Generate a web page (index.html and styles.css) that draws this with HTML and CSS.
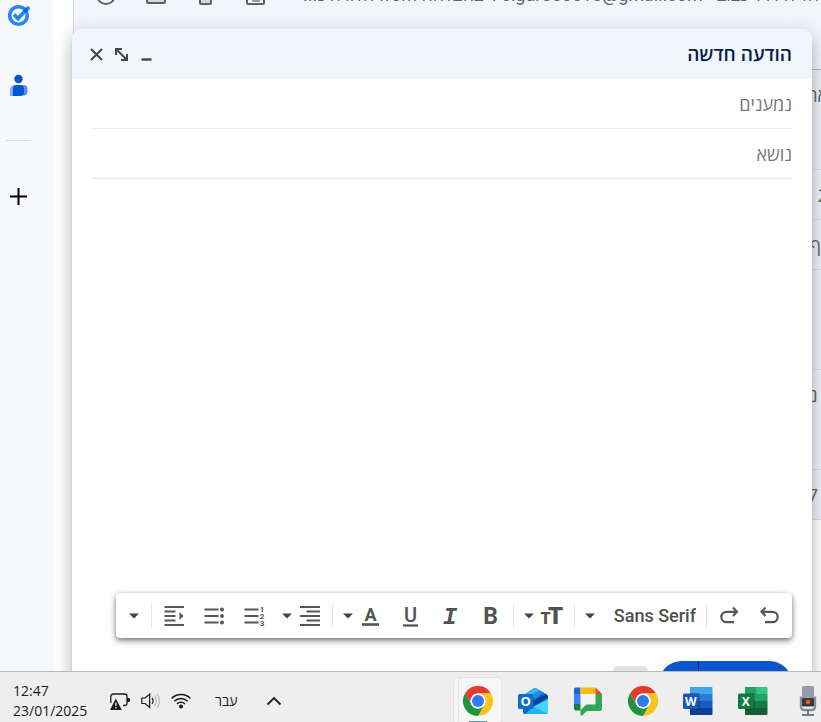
FILE: index.html
```html
<!DOCTYPE html>
<html lang="he">
<head>
<meta charset="utf-8">
<meta name="viewport" content="width=device-width, initial-scale=1">
<title>הודעה חדשה</title>
<link rel="stylesheet" href="styles.css">
</head>
<body>
<svg class="defs" aria-hidden="true">
  <symbol id="chrome" viewBox="0 0 48 48">
    <path fill="#e33b2e" d="M3.2 12A24 24 0 0 1 44.8 12H24A12 12 0 0 0 13.6 30Z"/>
    <path fill="#fcc31e" d="M44.8 12A24 24 0 0 1 24 48L34.4 30A12 12 0 0 0 24 12Z"/>
    <path fill="#229342" d="M24 48A24 24 0 0 1 3.2 12L13.6 30A12 12 0 0 0 34.4 30Z"/>
    <circle cx="24" cy="24" r="12" fill="#fff"/>
    <circle cx="24" cy="24" r="9.6" fill="#2f7bee"/>
  </symbol>
  <symbol id="caret" viewBox="0 0 10 6"><path fill="#444746" d="M0 .5h10L5 5.500z"/></symbol>
</svg>

<div class="workspace">
  <nav class="sidebar" aria-label="חלונית צדדית">
    <button class="side-button" aria-label="Tasks">
      <svg width="24" height="24" viewBox="0 0 24 24">
        <circle cx="11.500" cy="12.500" r="8.800" fill="none" stroke="#2684fc" stroke-width="3.600"/>
        <path d="M7 11.500l4 4 9.500-10" fill="none" stroke="#2684fc" stroke-width="3.800"/>
        <path d="M16.300 7.500l3-3.200 2.500 2.400-3 3.200z" fill="#0066da"/>
        <path d="M19.300 4.300l1.500-1.500 2.500 2.400-1.500 1.500z" fill="#2684fc"/>
      </svg>
    </button>
    <button class="side-button" aria-label="אנשי קשר">
      <svg width="24" height="24" viewBox="0 0 24 24">
        <circle cx="11.500" cy="6" r="4.200" fill="#0057cc"/>
        <path d="M8 12h5v11H3v-6a5 5 0 0 1 5-5z" fill="#7ea6fb"/>
        <path d="M12 12h4.500a4 4 0 0 1 4 4v3a4 4 0 0 1-4 3.500h-4.500z" fill="#5b8df8"/>
        <path d="M10 12h3a4 4 0 0 1 4 4v3a4 4 0 0 1-4 4H6v-7a4 4 0 0 1 4-4z" fill="#0057cc"/>
      </svg>
    </button>
    <hr class="side-divider">
    <button class="side-button" aria-label="הורדת תוספים">
      <svg width="24" height="24" viewBox="0 0 24 24"><path d="M11.500 4v17M3 12.500h17" stroke="#000" stroke-width="2"/></svg>
    </button>
  </nav>

  <main class="mail">
    <ul class="mail-list">
      <li class="mail-row mail-row--tall mail-row--hover">
        <span class="row-actions">
          <svg width="24" height="24" viewBox="0 0 24 24"><circle cx="12" cy="12" r="9" fill="none" stroke="#5f6368" stroke-width="2"/></svg>
          <svg width="24" height="24" viewBox="0 0 24 24"><rect x="3" y="4" width="18" height="16" rx="1" fill="#d5d7dc" stroke="#5f6368" stroke-width="2"/></svg>
          <svg width="24" height="24" viewBox="0 0 24 24"><rect x="6" y="4" width="11" height="17" rx="1" fill="#d5d7dc" stroke="#5f6368" stroke-width="2"/></svg>
          <svg width="24" height="24" viewBox="0 0 24 24"><rect x="3" y="4" width="17" height="17" rx="1" fill="#f2f5fc" stroke="#5f6368" stroke-width="2"/><path d="M8 18h8" stroke="#9a9da1" stroke-width="2"/></svg>
        </span>
        <span class="snippet" dir="rtl">אליה דויד נבוב - cigar555515@gmail.com ד בהצלחה from הלוויה נ...</span>
      </li>
      <li class="mail-row mail-row--tall"><span class="snippet snippet--edge snippet--over" dir="rtl">אר</span></li>
      <li class="mail-row"><span class="snippet snippet--edge snippet--over">2</span></li>
      <li class="mail-row"><span class="snippet snippet--edge" dir="rtl">ף</span></li>
      <li class="mail-row mail-row--tall"></li>
      <li class="mail-row mail-row--tall"><span class="snippet snippet--edge snippet--over" dir="rtl">- נ</span></li>
      <li class="mail-row"><span class="snippet snippet--edge snippet--inset">7</span></li>
    </ul>
  </main>

  <form class="compose" dir="rtl">
    <header class="compose-header">
      <h1 class="compose-title">הודעה חדשה</h1>
      <button type="button" class="window-button" aria-label="מזעור">
        <svg width="15" height="15" viewBox="0 0 15 15"><path d="M2.500 12.500h10" stroke="#444746" stroke-width="2.400"/></svg>
      </button>
      <button type="button" class="window-button" aria-label="מסך מלא">
        <svg width="15" height="15" viewBox="0 0 15 15"><path d="M2 8V2h6M13 7v6H7M2 2l11 11" fill="none" stroke="#444746" stroke-width="2"/></svg>
      </button>
      <button type="button" class="window-button" aria-label="סגירה">
        <svg width="15" height="15" viewBox="0 0 15 15"><path d="M2 2l11 11M13 2L2 13" stroke="#444746" stroke-width="2"/></svg>
      </button>
    </header>
    <div class="fields">
      <input class="field" type="text" aria-label="נמענים" placeholder="נמענים">
      <input class="field" type="text" aria-label="נושא" placeholder="נושא">
    </div>
    <textarea class="message" aria-label="גוף ההודעה"></textarea>

    <div class="toolbar" role="toolbar" aria-label="אפשרויות עיצוב">
      <button type="button" class="tool" aria-label="ביטול">
        <svg width="24" height="24" viewBox="0 0 24 24"><path d="M8.500 3.500L4.500 7.800l4 4.200M5 7.800h10.500a5.200 5.200 0 0 1 0 10.400H8" fill="none" stroke="#555857" stroke-width="2.200"/></svg>
      </button>
      <button type="button" class="tool" aria-label="ביצוע מחדש">
        <svg width="24" height="24" viewBox="0 0 24 24"><path d="M16 3.500l4 4.300-4 4.200M19.500 7.800H9.500a5.200 5.200 0 0 0 0 10.400H17" fill="none" stroke="#555857" stroke-width="2.200"/></svg>
      </button>
      <span class="separator"></span>
      <label class="font-picker">
        <select class="font-select" aria-label="גופן"><option>Sans Serif</option></select>
        <svg class="caret" width="10" height="6"><use href="#caret"/></svg>
      </label>
      <span class="separator"></span>
      <button type="button" class="tool tool--menu" aria-label="גודל">
        <svg width="24" height="24" viewBox="0 0 24 24"><g class="glyph glyph--heavy" text-anchor="middle"><text x="5.500" y="20" font-size="16">T</text><text x="15.500" y="20" font-size="24">T</text></g></svg>
        <svg class="caret" width="10" height="6"><use href="#caret"/></svg>
      </button>
      <span class="separator"></span>
      <button type="button" class="tool" aria-label="מודגש">
        <svg width="24" height="24" viewBox="0 0 24 24"><text class="glyph" x="11.500" y="20" font-size="23" text-anchor="middle">B</text></svg>
      </button>
      <button type="button" class="tool" aria-label="נטוי">
        <svg width="24" height="24" viewBox="0 0 24 24"><text class="glyph glyph--italic" x="11" y="20" font-size="24" text-anchor="middle">I</text></svg>
      </button>
      <button type="button" class="tool" aria-label="קו תחתון">
        <svg width="24" height="24" viewBox="0 0 24 24"><text class="glyph glyph--medium" x="11.500" y="18" font-size="20" text-anchor="middle">U</text><path d="M4 21.500h15" stroke="#505352" stroke-width="2.200"/></svg>
      </button>
      <button type="button" class="tool tool--menu" aria-label="צבע הטקסט">
        <svg width="24" height="24" viewBox="0 0 24 24"><text class="glyph" x="11.500" y="17" font-size="18" text-anchor="middle">A</text><path d="M3 20.500h17" stroke="#505352" stroke-width="2.600"/></svg>
        <svg class="caret" width="10" height="6"><use href="#caret"/></svg>
      </button>
      <span class="separator"></span>
      <button type="button" class="tool tool--menu" aria-label="יישור">
        <svg width="24" height="24" viewBox="0 0 24 24"><path d="M2 3h20M8.500 7.500H22M2 12h20M8.500 16.500H22M2 21h20" stroke="#555857" stroke-width="2.200"/></svg>
        <svg class="caret" width="10" height="6"><use href="#caret"/></svg>
      </button>
      <button type="button" class="tool" aria-label="רשימה ממוספרת">
        <svg width="24" height="24" viewBox="0 0 24 24"><path d="M2.500 5.500h14M2.500 12h14M2.500 18.500h14" stroke="#555857" stroke-width="2.200"/><g class="glyph" font-size="8" text-anchor="middle"><text x="20" y="8">1</text><text x="20" y="15">2</text><text x="20" y="22">3</text></g></svg>
      </button>
      <button type="button" class="tool" aria-label="רשימת תבליטים">
        <svg width="24" height="24" viewBox="0 0 24 24"><path d="M2.500 5.500h14M2.500 12h14M2.500 18.500h14" stroke="#555857" stroke-width="2.200"/><g fill="#505352"><circle cx="20" cy="5.500" r="1.900"/><circle cx="20" cy="12" r="1.900"/><circle cx="20" cy="18.500" r="1.900"/></g></svg>
      </button>
      <button type="button" class="tool" aria-label="הקטנת כניסה">
        <svg width="24" height="24" viewBox="0 0 24 24"><path d="M2.500 3h19.500M2.500 7.500H13.500M2.500 12H13.500M2.500 16.500H13.500M2.500 21h19.500" stroke="#555857" stroke-width="2.200"/><path d="M17.500 8l4 4-4 4z" fill="#505352"/></svg>
      </button>
      <span class="separator"></span>
      <button type="button" class="tool tool--narrow" aria-label="אפשרויות עיצוב נוספות">
        <svg class="caret" width="10" height="6"><use href="#caret"/></svg>
      </button>
    </div>

    <footer class="compose-footer">
      <button type="button" class="send" aria-label="שליחה"></button>
      <button type="button" class="send-more" aria-label="אפשרויות שליחה נוספות"></button>
      <button type="button" class="format-toggle" aria-label="אפשרויות עיצוב"></button>
    </footer>
  </form>
</div>

<footer class="taskbar">
  <div class="tray">
    <time class="clock" datetime="2025-01-23T12:47">12:47<br>23/01/2025</time>
    <svg width="22" height="20" viewBox="0 0 22 20">
      <path d="M1.800 12V5.500a2.500 2.500 0 0 1 2.500-2.500h11.200a2.500 2.500 0 0 1 2.500 2.500v6.500a2.500 2.500 0 0 1-2.500 2.500H14" fill="none" stroke="#1b1b1b" stroke-width="1.300"/>
      <path d="M18 7h1.300a1.400 1.400 0 0 1 0 4H18z" fill="#1b1b1b"/>
      <path d="M6.800 7.500l6 11.500H1z" fill="#1b1b1b"/><path d="M6.900 11.500v3.500M6.900 16v1.500" stroke="#fff" stroke-width="1.200"/>
    </svg>
    <svg width="20" height="20" viewBox="0 0 20 20" fill="none" stroke="#1b1b1b" stroke-width="1.200">
      <path d="M.8 7h3.400l4.500-4v13.500l-4.500-4H.8z"/><path d="M11 6.800a5 5 0 0 1 0 6"/>
      <path d="M13.500 4.500a8 8 0 0 1 0 10.500M16 2.800a11 11 0 0 1 0 14" stroke="#bcbcbc"/>
    </svg>
    <svg width="20" height="20" viewBox="0 0 20 20" fill="none" stroke="#1b1b1b" stroke-width="1.400">
      <path d="M.5 7.500a13.300 13.300 0 0 1 19 0M3.300 10.200a9.500 9.500 0 0 1 13.400 0M6 12.900a5.700 5.700 0 0 1 8 0"/><circle cx="10" cy="15.500" r="2" fill="#1b1b1b" stroke="none"/>
    </svg>
    <span class="language" dir="rtl">עבר</span>
    <button class="tray-toggle" aria-label="הצגת סמלים מוסתרים">
      <svg width="16" height="16" viewBox="0 0 16 16"><path d="M1.500 11.500L8 5l6.500 6.500" fill="none" stroke="#1b1b1b" stroke-width="1.800"/></svg>
    </button>
  </div>
  <div class="apps">
    <button class="app app--active" aria-label="Chrome"><svg width="30" height="30"><use href="#chrome"/></svg></button>
    <button class="app" aria-label="Outlook">
      <svg width="30" height="30" viewBox="0 0 30 30">
        <path d="M5 9.500L15.500 2.500a3 3 0 0 1 3 0L28 8a4 4 0 0 1 2 3v15a2 2 0 0 1-2 2H7a2 2 0 0 1-2-2z" fill="#0a66c8"/>
        <path d="M5 9.500L15.500 2.500a3 3 0 0 1 3 0L22 4.500 10 12z" fill="#35b5ee"/>
        <path d="M10 12l12-7.500 4 2.300L15 14z" fill="#1490df"/>
        <path d="M14 15.500L28.500 8.300q1.500 1 1.500 3L15 20z" fill="#0b3f91"/>
        <path d="M30 13v13a2 2 0 0 1-2 2H8l7-7z" fill="#43d3fb"/>
        <path d="M15 20.500l14 7-1 .5H8z" fill="#22b4f2"/>
        <rect y="8" width="15.500" height="15" rx="1.500" fill="#0f6ccb"/>
        <text class="logo-text" x="7.750" y="20" font-size="13">O</text>
      </svg>
    </button>
    <button class="app" aria-label="Google Chat">
      <svg width="30" height="30" viewBox="0 0 30 30">
        <path d="M7.500 8h15v10.500H7.500z" fill="#f4f4f4"/>
        <path d="M1 3.500A2 2 0 0 1 3 1.500h4.500V8H1z" fill="#1e63d5"/><path d="M1 8h6.500v10H1z" fill="#3f82f5"/>
        <path d="M7.500 1.500h15V8h-15z" fill="#fbbc04"/><path d="M22.500 1.500L29 8h-6.500z" fill="#ea4335"/>
        <path d="M1 18h6.500v6.500H3a2 2 0 0 1-2-2z" fill="#188038"/>
        <path d="M22.500 8H29v15a2 2 0 0 1-2 2H14L9 29.500q-1.500.5-1.500-1V24l6-5.500h9z" fill="#30a852"/>
      </svg>
    </button>
    <button class="app" aria-label="Chrome"><svg width="30" height="30"><use href="#chrome"/></svg></button>
    <button class="app" aria-label="Word">
      <svg width="30" height="30" viewBox="0 0 30 30">
        <path d="M7 1h21.500q1 0 1 1v6H7z" fill="#41a5ee"/><path d="M7 8h22.500v7H7z" fill="#2b7cd3"/><path d="M7 15h22.500v7H7z" fill="#185abd"/><path d="M7 22h22.500v6q0 1-1 1H7z" fill="#103f91"/>
        <path d="M7 7h10v17H7z" fill="#000" opacity=".2"/><rect y="7.500" width="15.500" height="15.500" rx="1.500" fill="#1a56b8"/>
        <text class="logo-text" x="7.750" y="19.500" font-size="12">W</text>
      </svg>
    </button>
    <button class="app" aria-label="Excel">
      <svg width="30" height="30" viewBox="0 0 30 30">
        <path d="M7 1h12v14H7z" fill="#21a366"/><path d="M18 1h10.500q1 0 1 1v6H18z" fill="#33c481"/><path d="M18 8h11.500v7H18z" fill="#21a366"/><path d="M7 15h22.500v7H7z" fill="#107c41"/><path d="M7 22h22.500v6q0 1-1 1H7z" fill="#185c37"/>
        <path d="M7 7h10v17H7z" fill="#000" opacity=".2"/><rect y="7.500" width="15.500" height="15.500" rx="1.500" fill="#107c41"/>
        <text class="logo-text" x="7.750" y="19.500" font-size="12">X</text>
      </svg>
    </button>
    <button class="app" aria-label="מקליט קול">
      <svg width="30" height="30" viewBox="0 0 30 30">
        <path d="M8 10.500v10.500a3 3 0 0 0 3 3h8a3 3 0 0 0 3-3V10.500" fill="none" stroke="#87919b" stroke-width="2.400"/>
        <rect x="9" y="0" width="12" height="21" rx="1.500" fill="#949ca6"/><path d="M9 12h12v8H9z" fill="#363b42"/>
        <circle cx="15" cy="16" r="2.300" fill="#f4511e"/><path d="M15 24v4.500M9 29h12" stroke="#727c86" stroke-width="2"/>
      </svg>
    </button>
  </div>
</footer>
</body>
</html>
```

FILE: styles.css
```css
* {
  box-sizing: border-box;
}

body {
  margin: 0;
  height: 100vh;
  display: flex;
  flex-direction: column;
  overflow: hidden;
  background: #fff;
  font-family: Roboto, "Open Sans", sans-serif;
  color: #444746;
}

button {
  display: flex;
  align-items: center;
  justify-content: center;
  padding: 0;
  border: 0;
  background: none;
  font: inherit;
}

svg {
  display: block;
  flex: none;
}

.defs {
  position: absolute;
  width: 0;
  height: 0;
}

.workspace {
  position: relative;
  flex: 1;
  min-height: 0;
  display: flex;
  overflow: hidden;
}

.sidebar {
  width: 53px;
  flex: none;
  display: flex;
  flex-direction: column;
  align-items: center;
  gap: 40px;
  padding-right: 16px;
  background: #f6f8fc;
}

.side-button {
  width: 30px;
  height: 30px;
}

.side-divider {
  width: 25px;
  height: 1px;
  margin: 0;
  border: 0;
  background: #dcdcdc;
}

.mail {
  flex: 1;
  min-width: 0;
  padding-left: 20px;
}

.mail-list {
  margin: -30px 0 0;
  padding: 0;
  list-style: none;
  border-left: 1px solid #d3d5da;
}

.mail-row {
  display: flex;
  align-items: flex-start;
  height: 50px;
  overflow: hidden;
  border-bottom: 1px solid #dadde3;
  background: #eef1f8;
  font-family: "Open Sans", sans-serif;
  font-size: 18px;
  line-height: 50px;
  white-space: nowrap;
  color: #5f6368;
}

.mail-row--tall {
  height: 100px;
}

.mail-row--hover {
  background: #f2f5fc;
  border-bottom-color: #b4b6bb;
  font-family: Roboto, "Open Sans", sans-serif;
}

.row-actions {
  display: flex;
  flex: none;
  align-items: center;
  gap: 26px;
  width: 229px;
  height: 50px;
  padding-left: 20px;
}

.snippet--edge {
  margin-left: auto;
}

.snippet--over {
  margin-right: -7px;
}

.snippet--inset {
  margin-right: 3px;
}

.compose {
  position: absolute;
  top: 29px;
  right: 9px;
  bottom: -55px;
  left: 72px;
  display: flex;
  flex-direction: column;
  border-radius: 10px 10px 0 0;
  background: #fff;
  box-shadow: 0 10px 13px 1px rgba(0, 0, 0, .14), 0 4px 18px 3px rgba(0, 0, 0, .12), 0 6px 6px -4px rgba(0, 0, 0, .2);
}

.compose-header {
  display: flex;
  align-items: center;
  height: 50px;
  flex: none;
  padding: 0 20px 0 12px;
  border-radius: 10px 10px 0 0;
  background: #f2f5fc;
}

.compose-title {
  flex: 1;
  margin: 0;
  font-family: "Open Sans", sans-serif;
  font-size: 19px;
  font-weight: 600;
  color: #041e49;
}

.window-button {
  width: 25px;
  height: 30px;
}

.fields {
  display: flex;
  flex-direction: column;
  padding: 0 20px;
}

.field {
  width: 100%;
  height: 50px;
  padding: 0;
  border: 0;
  border-bottom: 1px solid #e8ecee;
  background: none;
  font-family: "Open Sans", sans-serif;
  font-size: 18px;
  outline: 0;
}

.field::placeholder {
  color: #777;
  opacity: 1;
}

.message {
  flex: 1;
  min-height: 0;
  margin: 0 20px;
  padding: 12px 0;
  border: 0;
  outline: 0;
  resize: none;
  font: 18px "Open Sans", sans-serif;
}

.toolbar {
  display: flex;
  align-items: center;
  flex: none;
  height: 45px;
  margin: 0 20px 0 44px;
  padding: 0 3px 0 2px;
  border-radius: 4px;
  background: #fff;
  box-shadow: 0 2px 5px rgba(0, 0, 0, .5), 0 4px 12px rgba(0, 0, 0, .12);
}

.tool {
  width: 40px;
  height: 40px;
  flex: none;
}

.tool--menu {
  width: 56px;
  gap: 6px;
  justify-content: flex-start;
  padding-right: 8px;
}

.tool--narrow {
  width: 31px;
}

.separator {
  width: 1px;
  height: 25px;
  margin: 0 2px;
  flex: none;
  background: #e4e6e8;
}

.font-picker {
  display: flex;
  flex: 1;
  align-items: center;
  justify-content: space-between;
  padding: 0 8px;
}

.font-select {
  appearance: none;
  padding: 0;
  border: 0;
  background: none;
  font: 500 18px Roboto, sans-serif;
  color: #4d504f;
}

.glyph {
  font-family: Roboto, sans-serif;
  font-weight: 700;
  fill: #505352;
}

.glyph--medium {
  font-weight: 500;
}

.glyph--heavy {
  font-weight: 900;
}

.glyph--italic {
  font-family: "Liberation Mono", monospace;
  font-style: italic;
}

.compose-footer {
  display: flex;
  flex: none;
  height: 88px;
  padding: 23px 20px 0;
}

.send,
.send-more {
  height: 45px;
  background: #0b57d0;
}

.send {
  width: 93px;
  border-radius: 0 23px 23px 0;
}

.send-more {
  width: 40px;
  border-right: 1px solid #062e6f;
  border-radius: 23px 0 0 23px;
}

.format-toggle {
  width: 35px;
  height: 35px;
  margin: 5px 11px 0 0;
  border-radius: 5px;
  background: #e1e1e1;
}

.taskbar {
  display: flex;
  flex: none;
  justify-content: space-between;
  height: 51px;
  border-top: 1px solid #b9b9b9;
  background: #eee;
  color: #1b1b1b;
  font-family: "Open Sans", sans-serif;
  font-size: 14px;
  line-height: 20px;
}

.tray {
  display: flex;
  align-items: center;
  gap: 10px;
  padding-left: 13px;
  height: 58px;
}

.clock {
  width: 86px;
}

.language {
  margin-left: 14px;
}

.tray-toggle {
  margin-left: 18px;
}

.apps {
  display: flex;
  flex: none;
  margin-right: -14px;
}

.app {
  position: relative;
  width: 55px;
  height: 58px;
}

.app--active {
  width: 44px;
  height: 48px;
  margin: 5px 3px 0 0;
  padding-right: 4px;
  border: 1px solid #e2e2e2;
  border-radius: 5px;
  background: #f7f7f7;
  box-shadow: -5px 0 0 -1px #f5f5f5, -5px 0 0 0 #e2e2e2;
}

.app--active::after {
  content: "";
  position: absolute;
  right: 14px;
  bottom: 1px;
  left: 10px;
  height: 2px;
  background: #4f9aa8;
}

.logo-text {
  fill: #fff;
  font-family: "Open Sans", sans-serif;
  font-weight: 700;
  text-anchor: middle;
}
```
